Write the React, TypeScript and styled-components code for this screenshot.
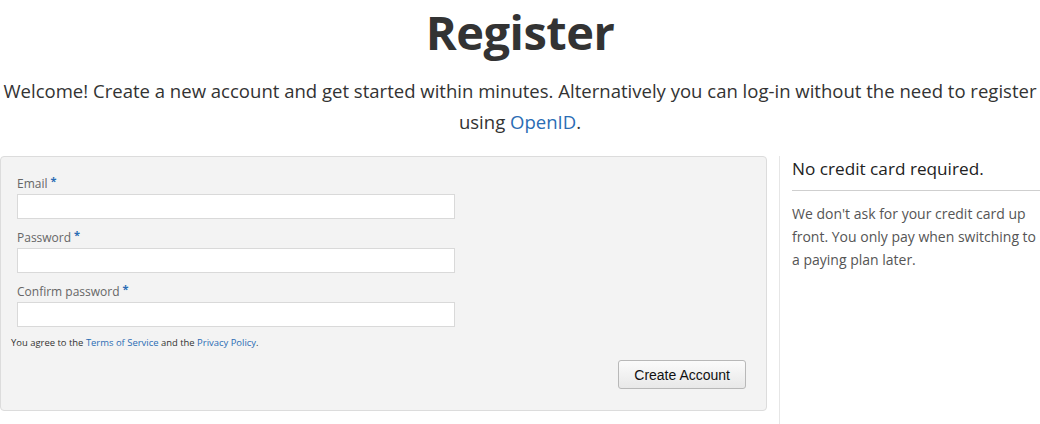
import React from "react";
import styled, { createGlobalStyle } from "styled-components";

const Global = createGlobalStyle`
  html, body { margin: 0; padding: 0; background: #fff; }
  body { font-family: "Open Sans", "DejaVu Sans", sans-serif; color: #333; overflow: hidden; }
  * { box-sizing: border-box; }
`;

const Page = styled.div`
  width: 1040px;
`;

const Header = styled.header`
  text-align: center;
`;

const Title = styled.h1`
  margin: 0;
  font-size: 47px;
  letter-spacing: -0.5px;
  line-height: 65px;
  font-weight: 700;
  color: #333;
`;

const Intro = styled.p`
  margin: 10px 0 0;
  font-size: 18.55px;
  line-height: 31px;
  color: #333;
`;

const Link = styled.a`
  color: #2a6cb4;
  text-decoration: none;
`;

const Columns = styled.div`
  display: flex;
  align-items: stretch;
  margin-top: 19px;
`;

const FormPanel = styled.form`
  flex: 0 0 767px;
  align-self: flex-start;
  background: #f3f3f3;
  border: 1px solid #dcdcdc;
  border-radius: 4px;
  padding: 18px 20px 21px 16px;
`;

const Field = styled.div`
  margin-bottom: 10px;
`;

const Label = styled.label`
  display: block;
  font-size: 12px;
  line-height: 18px;
  height: 18px;
  color: #666;
  margin-bottom: 1px;
`;

const Req = styled.span`
  position: relative;
  top: -3px;
  color: #2a6cb4;
  font-weight: 700;
  margin-left: 3px;
  font-size: 11px;
  line-height: 0;
`;

const Input = styled.input`
  display: block;
  width: 438px;
  height: 25px;
  border: 1px solid #d9d9d9;
  background: #fff;
  margin: 0;
  padding: 2px 4px;
  font: inherit;
`;

const Terms = styled.p`
  margin: -1px 0 0 -6px;
  font-size: 9.45px;
  line-height: 14px;
  color: #333;
`;

const Actions = styled.div`
  display: flex;
  justify-content: flex-end;
  margin-top: 10px;
`;

const Button = styled.button`
  height: 29px;
  padding: 0 15px;
  font-family: "Liberation Sans", Arial, sans-serif;
  font-size: 14px;
  color: #111;
  background: linear-gradient(#fbfbfb, #e8e8e8);
  border: 1px solid #b8b8b8;
  border-radius: 3px;
`;

const Aside = styled.aside`
  flex: 1 1 auto;
  margin-left: 12px;
  padding-left: 12px;
  border-left: 1px solid #e6e6e6;
  min-height: 270px;
`;

const AsideTitle = styled.h3`
  margin: 1px 0 0;
  font-size: 17.2px;
  line-height: 24px;
  font-weight: 400;
  color: #222;
`;

const Rule = styled.hr`
  margin: 9px 0 0;
  border: 0;
  border-top: 1px solid #cfcfcf;
`;

const AsideText = styled.p`
  margin: 11px 0 0;
  font-size: 14px;
  line-height: 23px;
  color: #555;
`;

const fields = [
  { id: "email", label: "Email", type: "email" },
  { id: "password", label: "Password", type: "password" },
  { id: "confirm", label: "Confirm password", type: "password" },
];

export default function App() {
  return (
    <Page>
      <Global />
      <Header>
        <Title>Register</Title>
        <Intro>
          Welcome! Create a new account and get started within minutes. Alternatively you can log-in without the need to register using <Link href="#">OpenID</Link>.
        </Intro>
      </Header>
      <Columns>
        <FormPanel onSubmit={(e) => e.preventDefault()}>
          {fields.map((f) => (
            <Field key={f.id}>
              <Label htmlFor={f.id}>
                {f.label}
                <Req>*</Req>
              </Label>
              <Input id={f.id} type={f.type} />
            </Field>
          ))}
          <Terms>
            You agree to the <Link href="#">Terms of Service</Link> and the <Link href="#">Privacy Policy</Link>.
          </Terms>
          <Actions>
            <Button type="submit">Create Account</Button>
          </Actions>
        </FormPanel>
        <Aside>
          <AsideTitle>No credit card required.</AsideTitle>
          <Rule />
          <AsideText>
            We don't ask for your credit card up front. You only pay when switching to a paying plan later.
          </AsideText>
        </Aside>
      </Columns>
    </Page>
  );
}
